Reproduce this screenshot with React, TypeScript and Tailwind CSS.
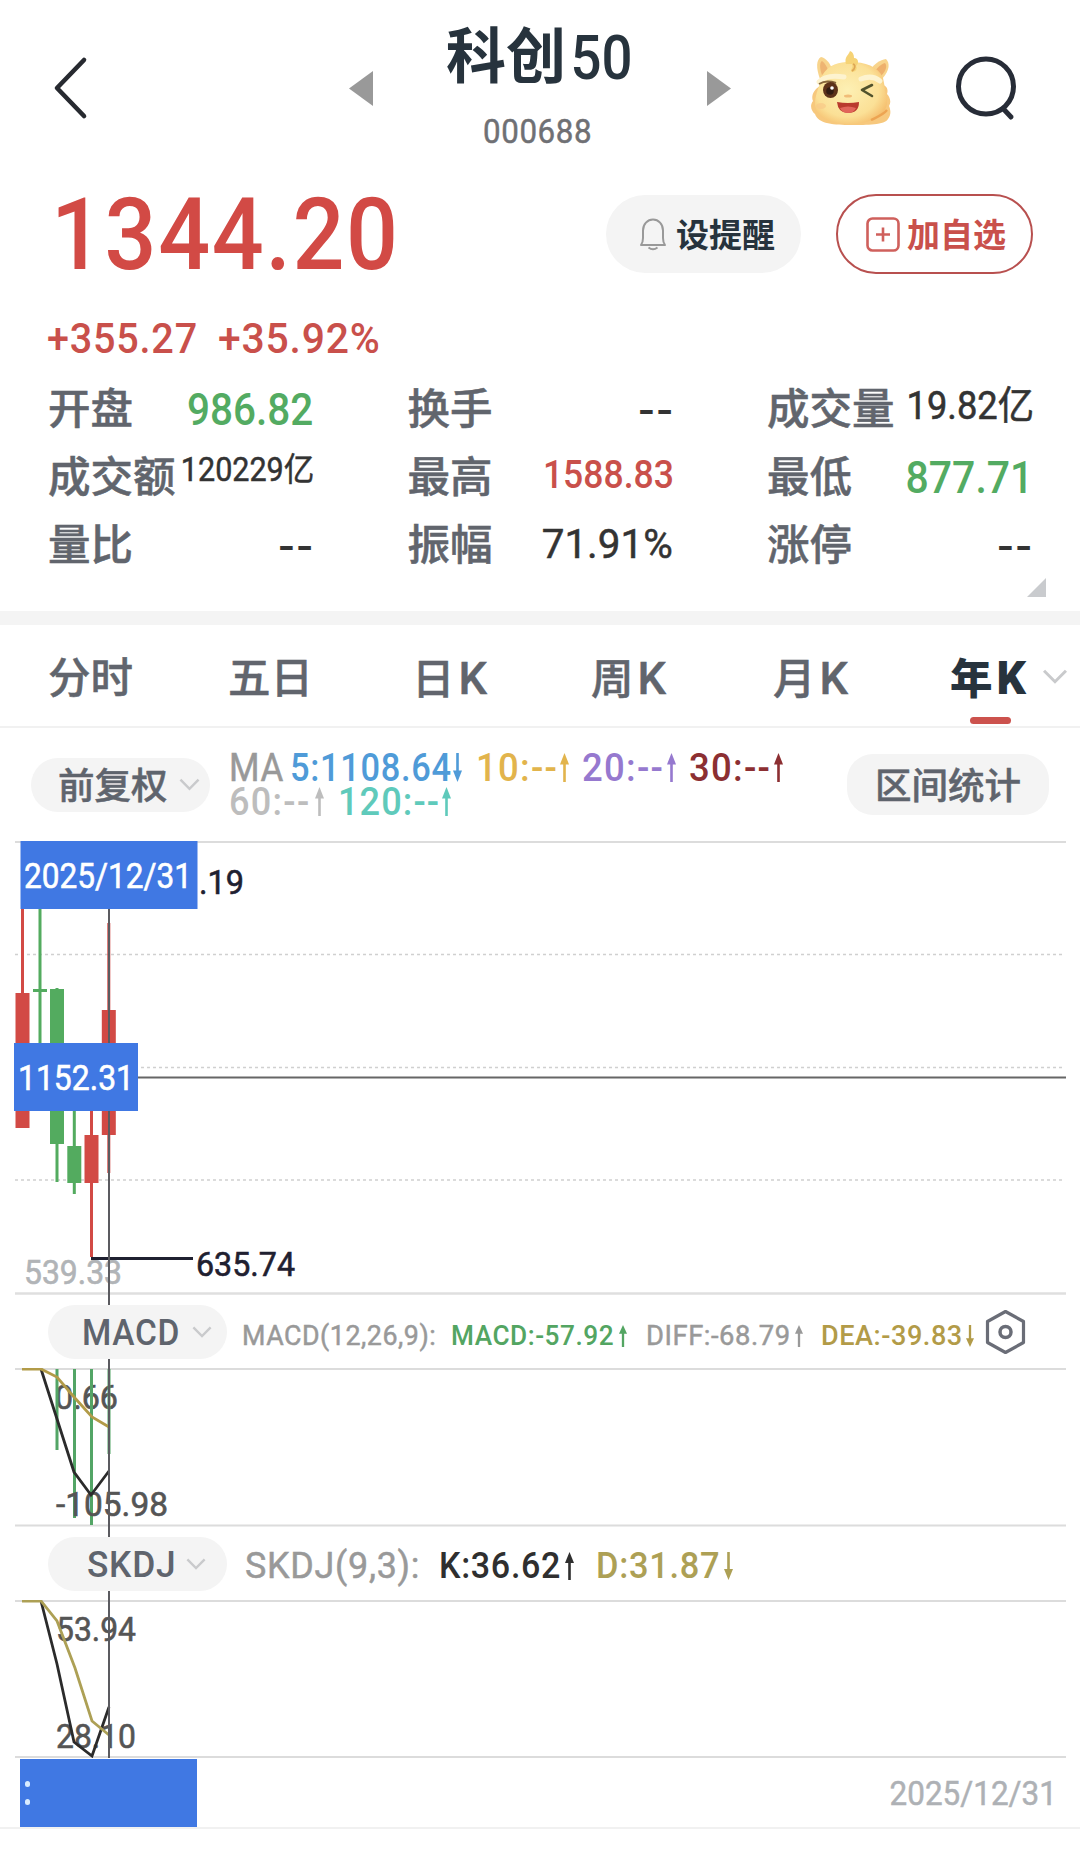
import type { ReactNode } from 'react'

const FONT = "font-['Roboto','Noto_Sans_CJK_SC',sans-serif]"
const HEAVIER = '[-webkit-text-stroke:0.5px]'

// Condensed numerals, `fit` overrides the horizontal squeeze and tracking
function Num({ children, className = '', fit = 'scale-x-[0.92] tracking-[0.02em]', right = false }: { children: ReactNode; className?: string; fit?: string; right?: boolean }) {
  return (
    <span className={`inline-block whitespace-nowrap ${fit} ${right ? 'origin-right' : 'origin-left'} ${className}`}>
      {children}
    </span>
  )
}

function Chevron({ className = '' }: { className?: string }) {
  return (
    <svg className={`shrink-0 ${className}`} viewBox="0 0 22 13" fill="none" stroke="#c9cacc" strokeWidth={2.6}>
      <path d="M1.5 1.5 L11 11 L20.5 1.5" />
    </svg>
  )
}

function Arrow({ down = false, className = '' }: { down?: boolean; className?: string }) {
  return (
    <svg className={`shrink-0 ${down ? 'rotate-180' : ''} ${className}`} viewBox="0 0 9 28" preserveAspectRatio="none" fill="currentColor">
      <path d="M4.5 0 L9 11 H0 Z" />
      <rect x="3.2" y="10" width="2.6" height="18" />
    </svg>
  )
}

function Mascot() {
  return (
    <svg className="w-[82px] h-[76px]" viewBox="0 0 82 76">
      <defs>
        <radialGradient id="face" cx="45%" cy="45%" r="62%">
          <stop offset="0" stopColor="#fdf0b4" />
          <stop offset="0.7" stopColor="#fbe096" />
          <stop offset="1" stopColor="#f5bd6c" />
        </radialGradient>
      </defs>
      <path d="M10 36 C3 40 1 47 3 51 C-1 56 2 62 5 64 C8 74 25 75 41 75 C57 75 75 75 78 69 C82 64 80 58 79 56 C82 51 79 46 77 44 C79 38 75 35 72 35 Z" fill="#f7c87d" />
      <path d="M10 29 C6 18 6 10 11 7 C16 8 20 13 22 19 Z" fill="#f8d48c" />
      <path d="M12 25 C9 17 10 12 12 11 C15 13 17 17 18 20 Z" fill="#eeb472" />
      <path d="M72 29 C80 20 80 13 76 9 C70 10 64 14 61 19 Z" fill="#f8d48c" />
      <path d="M71 26 C77 20 77 15 75 13 C71 14 67 18 65 21 Z" fill="#eeb06c" />
      <path d="M12 26 C18 14 30 12 40 12 C55 12 68 16 73 28 C75 36 75 44 77 51 C78 64 62 74 40 74 C17 74 4 65 5 52 C6 42 9 38 12 26 Z" fill="url(#face)" />
      <path d="M36 14 C34 7 38 6 40 1 C43 2 44 5 44 8 C49 8 49 14 46 16 C48 19 45 22 42 22 C39 20 44 18 42 14 Z" fill="#f6d376" />
      <path d="M43 14 C46 15 45 19 42 21" fill="none" stroke="#dda656" strokeWidth="1.6" />
      <path d="M9 32 C15 25 27 26 34 27" fill="none" stroke="#fdf3cf" strokeWidth="5" strokeLinecap="round" />
      <path d="M51 29 C58 26 65 27 70 31" fill="none" stroke="#fdf3cf" strokeWidth="5" strokeLinecap="round" />
      <path d="M9 34 C14 31 20 31 26 33" fill="none" stroke="#85643b" strokeWidth="2" />
      <ellipse cx="20.5" cy="40" rx="7.5" ry="8" fill="#5d321a" />
      <circle cx="20" cy="41" r="3.8" fill="#321c13" />
      <circle cx="22" cy="38" r="1.8" fill="#fff" />
      <path d="M62 35 L52 40 L62 46" fill="none" stroke="#51522c" strokeWidth="2.6" strokeLinecap="round" strokeLinejoin="round" />
      <ellipse cx="38" cy="46" rx="4" ry="1.5" fill="#f1bd78" />
      <path d="M27 52 Q38 54 49 52 Q49 63 38 63 Q28 63 27 52 Z" fill="#b93a2d" />
      <path d="M30 58 Q38 55 46 58 Q44 63 38 63 Q32 63 30 58 Z" fill="#e1655a" />
      <ellipse cx="11" cy="56" rx="5" ry="3" fill="#f8c987" opacity=".7" />
      <path d="M61 70 C67 67 73 65 77 60" fill="none" stroke="#eda452" strokeWidth="2.5" />
    </svg>
  )
}

const dash = { fit: 'scale-x-[1.15] tracking-[0.04em]', cls: 'text-[42px] text-[#333] font-medium top-[3px] left-[2px]' }

const stats = [
  { label: '开盘', value: '986.82', fit: 'scale-x-[0.92]', cls: 'text-[44px] text-[#53ab62] font-medium top-[2px] left-0' },
  { label: '换手', value: '--', ...dash },
  { label: '成交量', value: '19.82亿', fit: 'scale-x-[0.93]', cls: 'text-[39px] text-[#333] top-[-2px] left-[2px] [-webkit-text-stroke:0.6px]' },
  { label: '成交额', value: '120229亿', fit: 'scale-x-[0.925]', cls: 'text-[33px] text-[#333] top-[-7px] left-[1px] [-webkit-text-stroke:0.5px]' },
  { label: '最高', value: '1588.83', fit: 'scale-x-[0.91]', cls: 'text-[39px] text-[#c9504b] font-medium top-[-1px] left-[1px]' },
  { label: '最低', value: '877.71', fit: 'scale-x-[0.93]', cls: 'text-[44px] text-[#53ab62] font-medium top-[2px] left-[1px]' },
  { label: '量比', value: '--', ...dash },
  { label: '振幅', value: '71.91%', fit: 'scale-x-[1.01]', cls: 'text-[40px] text-[#333] top-[1px] left-0 [-webkit-text-stroke:0.5px]' },
  { label: '涨停', value: '--', ...dash },
]

const tabs = [
  { name: '分时', cls: 'w-[180px]' },
  { name: '五日', cls: 'w-[184px]' },
  { name: '日', k: true, cls: 'w-[179px]' },
  { name: '周', k: true, cls: 'w-[182px]' },
  { name: '月', k: true, cls: 'w-[177px]' },
]

const maTop = [
  { text: '5:1108.64', down: true, fit: 'scale-x-[0.905] tracking-[0.02em]', w: 'w-[163px]', box: 'w-[186px]', color: 'text-[#4f9bd8]' },
  { text: '10:--', down: false, fit: 'scale-x-[0.96] tracking-[0.035em]', w: 'w-[84px]', box: 'w-[106px]', color: 'text-[#e2b44c]' },
  { text: '20:--', down: false, fit: 'scale-x-[0.96] tracking-[0.035em]', w: 'w-[85px]', box: 'w-[107px]', color: 'text-[#9679cf]' },
  { text: '30:--', down: false, fit: 'scale-x-[0.96] tracking-[0.035em]', w: 'w-[85px]', box: 'w-[107px]', color: 'text-[#8c2f32]' },
]

const maBottom = [
  { text: '60:--', down: false, fit: 'scale-x-[0.95] tracking-[0.035em]', w: 'w-[86px]', box: 'w-[109px]', color: 'text-[#bdbdbd]' },
  { text: '120:--', down: false, fit: 'scale-x-[0.95] tracking-[0.03em]', w: 'w-[104px]', box: 'w-[130px]', color: 'text-[#5fcabb]' },
]

type MaItem = (typeof maTop)[number]

function MaValue({ item }: { item: MaItem }) {
  return (
    <span className={`flex items-center ${item.box} ${item.color}`}>
      <span className={item.w}><Num fit={item.fit} className="font-medium">{item.text}</Num></span>
      <Arrow down={item.down} className="w-[9px] h-[29px]" />
    </span>
  )
}

const candles = [
  { x: 22.5, high: 60, low: 287, top: 152, bottom: 287, color: '#d24a45' },
  { x: 40, high: 60, low: 250, top: 148, bottom: 151, color: '#53ab5f' },
  { x: 57, high: 147, low: 341, top: 148, bottom: 303, color: '#53ab5f' },
  { x: 74.3, high: 202, low: 353, top: 305, bottom: 342, color: '#53ab5f' },
  { x: 91.5, high: 202, low: 416, top: 294, bottom: 342, color: '#d24a45' },
  { x: 108.8, high: 82, low: 332, top: 169, bottom: 294, color: '#d24a45' },
]

function SvgNum({ x, y, w, size = 34, fill = '#555', children }: { x: number; y: number; w: number; size?: number; fill?: string; children: string }) {
  return (
    <text x={x} y={y} fontSize={size} fill={fill} stroke={fill} strokeWidth={0.6} textLength={w} lengthAdjust="spacingAndGlyphs">{children}</text>
  )
}

function KChart() {
  return (
    <svg className="block w-full h-[454px]" viewBox="0 0 1080 454">
      <path d="M15 1 H1066" stroke="#dcdcdc" strokeWidth="2" />
      {[113.5, 226.5, 339].map(y => (
        <path key={y} d={`M15 ${y} H1064`} stroke="#d0d0d0" strokeWidth="1.5" strokeDasharray="3 3" />
      ))}
      <path d="M15 452.5 H1066" stroke="#dfdfdf" strokeWidth="2.5" />
      {candles.map(c => (
        <g key={c.x} fill={c.color}>
          <rect x={c.x - 1.5} y={c.high} width={3} height={c.low - c.high} />
          <rect x={c.x - 7} y={c.top} width={14} height={c.bottom - c.top} />
        </g>
      ))}
      <SvgNum x={24} y={443} w={98} fill="#b1b4b7">539.33</SvgNum>
      <path d="M91 417.5 H193" stroke="#1f2030" strokeWidth="3" />
      <SvgNum x={196} y={435} w={99} fill="#1f2030">635.74</SvgNum>
      <SvgNum x={199} y={53} w={45} fill="#1f2030">.19</SvgNum>
      <path d="M138 236.5 H1066" stroke="#666" strokeWidth="2" />
      <path d="M109 68 V454" stroke="#5b5b60" strokeWidth="2" />
      <rect x="20.5" y="0" width="177" height="68" fill="#4078e3" />
      <SvgNum x={24} y={47} w={168} size={35} fill="#fff">2025/12/31</SvgNum>
      <rect x="14" y="202" width="124" height="68" fill="#4078e3" />
      <SvgNum x={18} y={249} w={116} size={35} fill="#fff">1152.31</SvgNum>
    </svg>
  )
}

function MacdChart() {
  return (
    <svg className="block w-full h-[159px]" viewBox="0 0 1080 159">
      <path d="M15 1 H1066 M15 157.5 H1066" stroke="#dcdcdc" strokeWidth="2" />
      <SvgNum x={55} y={41} w={63}>0.66</SvgNum>
      <path d="M57 1 V82 M74.5 1 V150 M91.5 1 V157 M109 1 V86" stroke="#53a566" strokeWidth="3" />
      <SvgNum x={56} y={148} w={112}>-105.98</SvgNum>
      <path d="M41 1 L57 51 L74 104 L91 127 L109 103" fill="none" stroke="#2b2b2b" strokeWidth="2.8" />
      <path d="M22 1 H41 L57 9 L74 29 L92 49 L109 59" fill="none" stroke="#b29b48" strokeWidth="2.8" />
    </svg>
  )
}

function SkdjChart() {
  return (
    <svg className="block w-full h-[158px]" viewBox="0 0 1080 158">
      <path d="M15 1 H1066 M15 157 H1066" stroke="#dcdcdc" strokeWidth="2" />
      <SvgNum x={56} y={41} w={80}>53.94</SvgNum>
      <SvgNum x={56} y={148} w={80}>28.10</SvgNum>
      <path d="M41 1 L57 64 L74 142 L92 156 L109 107" fill="none" stroke="#2b2b2b" strokeWidth="2.8" />
      <path d="M22 1 H41 L57 21 L75 68 L92 121 L109 135" fill="none" stroke="#ada055" strokeWidth="2.8" />
    </svg>
  )
}

export default function App() {
  return (
    <div className={`w-[1080px] h-[1852px] overflow-hidden bg-white leading-none ${FONT}`}>
      {/* header */}
      <header className="flex items-center h-[176px] pl-[52px]">
        <svg className="w-[36px] h-[66px]" viewBox="0 0 36 66" fill="none" stroke="#272a30" strokeWidth="4.6" strokeLinecap="round" strokeLinejoin="round">
          <path d="M32 5 L5 33 L32 61" />
        </svg>
        <svg className="ml-[261px] w-[24px] h-[35px]" viewBox="0 0 24 35"><path d="M24 0 V35 L0 17.5 Z" fill="#999" /></svg>
        <div className="flex flex-col items-start w-[334px] h-full pt-[22px] pl-[73px]">
          <h1 className="flex text-[60px] leading-[72px] text-[#27333d]">
            <span className="font-bold">科创</span>
            <Num fit="scale-x-[0.88]" className="pl-[5px] text-[62px] font-medium">50</Num>
          </h1>
          <div className="mt-[19px] pl-[37px] leading-[36px]">
            <Num className={`text-[34px] text-[#6f7074] ${HEAVIER}`}>000688</Num>
          </div>
        </div>
        <svg className="w-[24px] h-[35px]" viewBox="0 0 24 35"><path d="M0 0 V35 L24 17.5 Z" fill="#999" /></svg>
        <div className="ml-[79px]"><Mascot /></div>
        <svg className="ml-[63px] w-[64px] h-[66px]" viewBox="0 0 64 66" fill="none" stroke="#272c37" strokeWidth="5" strokeLinecap="round">
          <circle cx="31" cy="31.5" r="27.5" />
          <path d="M48.5 54 L56 62" />
        </svg>
      </header>

      {/* price */}
      <section className="flex items-center h-[116px] pl-[51px]">
        <div className="w-[555px]">
          <Num fit="scale-x-[0.905] tracking-[0.018em]" className="text-[101px] text-[#d24a45] font-medium">1344.20</Num>
        </div>
        <button className="flex items-center w-[195px] h-[78px] pl-[33px] rounded-full bg-[#f4f4f4] text-[33px] font-bold text-[#27333d]">
          <svg className="mr-[9px] w-[28px] h-[33px] shrink-0" viewBox="0 0 28 33" fill="none" stroke="#999" strokeWidth="2" strokeLinejoin="round">
            <path d="M2 27 C3.5 25 4 23 4 20 V12.5 C4 6 8.5 1.5 14 1.5 S24 6 24 12.5 V20 C24 23 24.5 25 26 27 Z" />
            <path d="M9.5 29.5 Q14 33 18.5 29.5" />
          </svg>
          <span className="whitespace-nowrap pt-[2px]">设提醒</span>
        </button>
        <button className="flex items-center ml-[35px] w-[197px] h-[80px] pl-[28px] rounded-full border-2 border-[#b8504f] text-[33px] font-bold text-[#c9504b]">
          <svg className="mr-[7px] w-[34px] h-[35px] shrink-0" viewBox="0 0 34 35" fill="none" stroke="#cf605c" strokeWidth="2.6">
            <rect x="1.5" y="1.5" width="31" height="32" rx="5" />
            <path d="M10 17.5 H24 M17 10.5 V24.5" />
          </svg>
          <span className="whitespace-nowrap pt-[2px]">加自选</span>
        </button>
      </section>

      <div className="flex items-center h-[82px] pl-[47px] pt-[10px] text-[43px] font-medium text-[#c9504b]">
        <div className="w-[171px]"><Num>+355.27</Num></div>
        <Num fit="scale-x-[0.95] tracking-[0.02em]">+35.92%</Num>
      </div>

      {/* quote stats */}
      <section className="grid grid-cols-[265px_265px_265px] auto-rows-[68px] justify-between px-[48px]">
        {stats.map(s => (
          <div key={s.label} className="flex items-center justify-between">
            <span className={`pt-[5px] whitespace-nowrap text-[42.5px] font-medium text-[#61656d] ${HEAVIER}`}>{s.label}</span>
            <span className="flex w-0 justify-end">
              <Num right fit={s.fit} className={`relative ${s.cls}`}>{s.value}</Num>
            </span>
          </div>
        ))}
      </section>
      <div className="flex justify-end h-[33px] pr-[34px]">
        <svg className="w-[19px] h-[19px]" viewBox="0 0 19 19"><path d="M19 0 V19 H0 Z" fill="#c9cbce" /></svg>
      </div>
      <div className="h-[14px] bg-[#f4f4f4]" />

      {/* period tabs */}
      <nav className="flex items-center h-[103px] pt-[6px] pl-[48px] border-b-2 border-[#f1f1f1] text-[42.5px] leading-[44px] font-medium text-[#61656d]">
        {tabs.map(t => (
          <div key={t.name} className={`whitespace-nowrap ${HEAVIER} ${t.cls}`}>
            {t.name}{t.k && <span className="ml-[4px] text-[45px] leading-none">K</span>}
          </div>
        ))}
        <div className="relative whitespace-nowrap font-black text-[#27333d]">
          年<span className="ml-[4px] text-[46px] leading-none">K</span>
          <span className="absolute left-[20px] top-[62px] w-[41px] h-[7px] rounded-full bg-[#cc524d]" />
        </div>
        <Chevron className="ml-[16px] w-[26px] h-[15px] -mt-[4px]" />
      </nav>

      {/* moving averages */}
      <section className="flex items-center h-[113px] pl-[31px]">
        <button className={`flex items-center w-[179px] h-[54px] pl-[27px] rounded-full bg-[#f4f4f4] text-[36.5px] font-medium text-[#5f646d] ${HEAVIER}`}>
          <span className="whitespace-nowrap pt-[5px]">前复权</span>
          <Chevron className="ml-[11px] w-[21px] h-[13px]" />
        </button>
        <div className="flex flex-col w-[637px] pl-[19px] text-[38px] leading-[34px]">
          <div className="flex items-center">
            <span className="w-[61px] text-[#999]"><Num className={HEAVIER}>MA</Num></span>
            {maTop.map(m => <MaValue key={m.text} item={m} />)}
          </div>
          <div className="flex items-center">
            {maBottom.map(m => <MaValue key={m.text} item={m} />)}
          </div>
        </div>
        <button className={`flex items-center justify-center w-[202px] h-[61px] pt-[5px] rounded-[26px] bg-[#f4f4f4] text-[36.5px] font-medium text-[#5f646d] ${HEAVIER}`}>
          区间统计
        </button>
      </section>

      {/* charts, the crosshair runs down behind the indicator buttons */}
      <section className="relative">
        <span className="absolute z-10 left-[108px] top-[454px] w-[2px] h-[463px] bg-[#5b5b60]" />
        <KChart />
        <div className="flex items-center h-[73px] pl-[48px]">
          <button className="relative z-20 flex items-center w-[179px] h-[54px] pl-[32px] rounded-full bg-[#f4f4f4] text-[37px] text-[#5f646d]">
            <span className="w-[112px] pt-[2px]"><Num fit="scale-x-[0.905] tracking-[0.02em]" className="font-medium">MACD</Num></span>
            <Chevron className="w-[20px] h-[12px]" />
          </button>
          <div className="flex items-center pt-[9px] pl-[15px] text-[28.5px] font-medium">
            <span className={`w-[209px] font-normal text-[#999] ${HEAVIER}`}><Num fit="scale-x-[0.94] tracking-[0.02em]">MACD(12,26,9):</Num></span>
            <span className="flex items-center w-[195px] text-[#53a562]">
              <span className="w-[168px]"><Num>MACD:-57.92</Num></span>
              <Arrow className="w-[8px] h-[22px]" />
            </span>
            <span className={`flex items-center w-[175px] font-normal text-[#999] ${HEAVIER}`}>
              <span className="w-[149px]"><Num fit="scale-x-[0.96] tracking-[0.02em]">DIFF:-68.79</Num></span>
              <Arrow className="w-[8px] h-[22px]" />
            </span>
            <span className="flex items-center w-[164px] text-[#b29b48]">
              <span className="w-[145px]"><Num fit="scale-x-[0.95] tracking-[0.02em]">DEA:-39.83</Num></span>
              <Arrow down className="w-[8px] h-[22px]" />
            </span>
          </div>
          <svg className="w-[42px] h-[46px]" viewBox="0 0 42 46" fill="none" stroke="#6a6d77" strokeWidth="3.2" strokeLinejoin="round">
            <path d="M20.5 2.5 L38.5 12.5 V33.5 L20.5 43.5 L2.5 33.5 V12.5 Z" />
            <circle cx="20.5" cy="23" r="5.5" strokeWidth="3.5" />
          </svg>
        </div>
        <MacdChart />
        <div className="flex items-center h-[73px] pl-[48px]">
          <button className="relative z-20 flex items-center w-[179px] h-[54px] pl-[36px] rounded-full bg-[#f4f4f4] text-[37px] text-[#5f646d]">
            <span className="w-[102px] pt-[2px]"><Num fit="scale-x-[0.955] tracking-[0.02em]" className="-ml-[3px] font-medium">SKDJ</Num></span>
            <Chevron className="w-[20px] h-[12px]" />
          </button>
          <div className="flex items-center pt-[4px] pl-[18px] text-[37px] font-medium">
            <span className={`w-[194px] font-normal text-[#999] ${HEAVIER}`}><Num fit="scale-x-[0.97] tracking-[0.02em]">SKDJ(9,3):</Num></span>
            <span className="flex items-center w-[157px] text-[#2f2f2f]">
              <span className="w-[126px]"><Num>K:36.62</Num></span>
              <Arrow className="w-[9px] h-[28px]" />
            </span>
            <span className="flex items-center text-[#ada055]">
              <span className="w-[128px]"><Num fit="scale-x-[0.93] tracking-[0.02em]">D:31.87</Num></span>
              <Arrow down className="w-[9px] h-[28px]" />
            </span>
          </div>
        </div>
        <SkdjChart />
        <div className="flex items-center justify-between h-[71px] pl-[20px] pr-[23px] border-b-2 border-[#f1f1f1]">
          <div className="flex flex-col justify-center gap-[12px] w-[177px] h-[68px] pl-[5px] bg-[#4078e3]">
            <span className="w-[5px] h-[6px] rounded-full bg-[#d9ecff]" />
            <span className="w-[5px] h-[6px] rounded-full bg-[#d9ecff]" />
          </div>
          <Num right fit="scale-x-[0.925]" className={`text-[34px] text-[#aeb1b5] ${HEAVIER}`}>2025/12/31</Num>
        </div>
      </section>
    </div>
  )
}
